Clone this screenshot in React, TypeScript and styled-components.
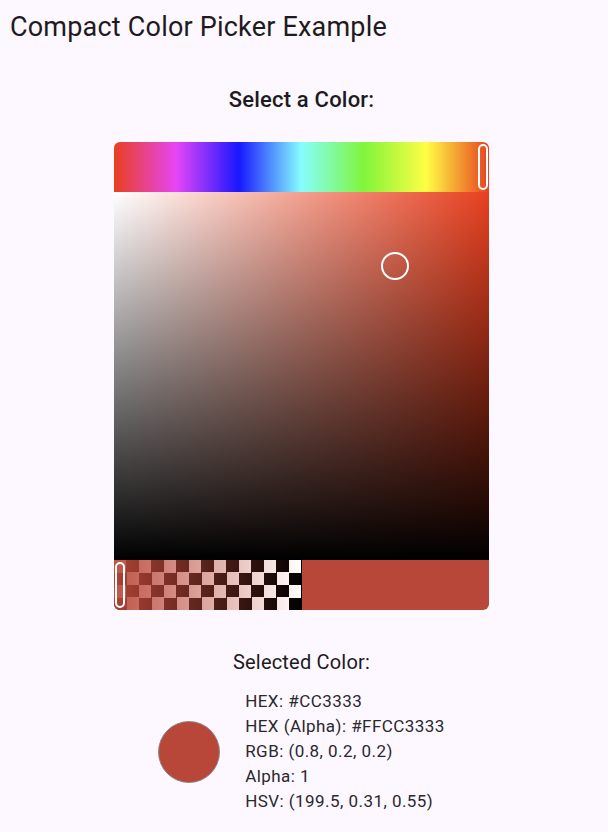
import React from "react";
import styled, { createGlobalStyle } from "styled-components";

const GlobalStyle = createGlobalStyle`
  html, body {
    margin: 0;
    padding: 0;
    background: #fdf7ff;
  }
  body {
    font-family: Roboto, "Noto Sans", sans-serif;
    color: #1d1b20;
  }
`;

const HUE = "#e8401f";
const SELECTED = "#b94739";

interface ColorInfo {
  label: string;
  value: string;
}

const info: ColorInfo[] = [
  { label: "HEX", value: "#CC3333" },
  { label: "HEX (Alpha)", value: "#FFCC3333" },
  { label: "RGB", value: "(0.8, 0.2, 0.2)" },
  { label: "Alpha", value: "1" },
  { label: "HSV", value: "(199.5, 0.31, 0.55)" },
];

const App: React.FC = () => {
  return (
    <>
      <GlobalStyle />
      <SPage>
        <STitleBar>
          <STitle>Compact Color Picker Example</STitle>
        </STitleBar>
        <SBody>
          <SHeading>Select a Color:</SHeading>
          <SPicker>
            <SHueBar>
              <SBarThumb side="right" />
            </SHueBar>
            <SSatArea hue={HUE}>
              <SSatThumb style={{ left: "75%", top: "20%" }} />
            </SSatArea>
            <SAlphaBar>
              <SChecker color={SELECTED} />
              <SSwatch color={SELECTED} />
              <SBarThumb side="left" />
            </SAlphaBar>
          </SPicker>
          <SLabel>Selected Color:</SLabel>
          <SResult>
            <SCircle color={SELECTED} />
            <SInfoList>
              {info.map((row) => (
                <SInfoLine key={row.label}>
                  {row.label}: {row.value}
                </SInfoLine>
              ))}
            </SInfoList>
          </SResult>
        </SBody>
      </SPage>
    </>
  );
};

const SPage = styled.div`
  display: flex;
  flex-direction: column;
  width: 608px;
  min-height: 832px;
`;

const STitleBar = styled.header`
  height: 56px;
  display: flex;
  align-items: center;
  padding: 0 10px 2px;
  box-sizing: border-box;
`;

const STitle = styled.h1`
  margin: 0;
  font-size: 27px;
  font-weight: 400;
  letter-spacing: 0.2px;
`;

const SBody = styled.main`
  display: flex;
  flex-direction: column;
  align-items: center;
  padding-right: 5px;
`;

const SHeading = styled.h2`
  margin: 30px 0 0;
  height: 28px;
  line-height: 28px;
  font-size: 22px;
  font-weight: 500;
  letter-spacing: 0.2px;
`;

const SPicker = styled.div`
  margin-top: 28px;
  width: 375px;
  display: flex;
  flex-direction: column;
`;

const SHueBar = styled.div`
  position: relative;
  height: 50px;
  border-radius: 6px 6px 0 0;
  background: linear-gradient(
    to right,
    #e8401f 0%,
    #e645f7 16.6%,
    #1818fe 33.3%,
    #86fefe 50%,
    #80f53b 66.6%,
    #fefe44 83.3%,
    #e8401f 100%
  );
`;

const SBarThumb = styled.div<{ side: "left" | "right" }>`
  position: absolute;
  top: 2px;
  bottom: 2px;
  ${(p) => (p.side === "left" ? "left: 1px;" : "right: 1px;")}
  width: 10px;
  box-sizing: border-box;
  border: 2.5px solid #ffffff;
  border-radius: 6px;
`;

const SSatArea = styled.div<{ hue: string }>`
  position: relative;
  height: 368px;
  background: linear-gradient(to bottom, rgba(0, 0, 0, 0), #000000),
    linear-gradient(to right, #ffffff, ${(p) => p.hue});
`;

const SSatThumb = styled.div`
  position: absolute;
  width: 28px;
  height: 28px;
  margin: -14px 0 0 -14px;
  box-sizing: border-box;
  border: 2px solid #ffffff;
  border-radius: 50%;
`;

const SAlphaBar = styled.div`
  position: relative;
  height: 50px;
  display: flex;
  border-radius: 0 0 6px 6px;
  overflow: hidden;
`;

const SChecker = styled.div<{ color: string }>`
  flex: 1;
  background: linear-gradient(to right, ${(p) => p.color}ee, ${(p) => p.color}00),
    repeating-conic-gradient(#000000 0 25%, #ffffff 0 50%) 0 0 / 25px 25px;
`;

const SSwatch = styled.div<{ color: string }>`
  flex: 1;
  background: ${(p) => p.color};
`;

const SLabel = styled.div`
  margin-top: 40px;
  font-size: 20px;
  line-height: 24px;
  letter-spacing: 0.2px;
`;

const SResult = styled.div`
  margin-top: 15px;
  display: flex;
  align-items: center;
  gap: 25px;
`;

const SCircle = styled.div<{ color: string }>`
  width: 62px;
  height: 62px;
  box-sizing: border-box;
  border-radius: 50%;
  background: ${(p) => p.color};
  border: 1.5px solid #8a8a8a;
`;

const SInfoList = styled.div`
  display: flex;
  flex-direction: column;
`;

const SInfoLine = styled.div`
  font-size: 17px;
  line-height: 25px;
  letter-spacing: 0.45px;
  color: #2a282d;
`;

export default App;
